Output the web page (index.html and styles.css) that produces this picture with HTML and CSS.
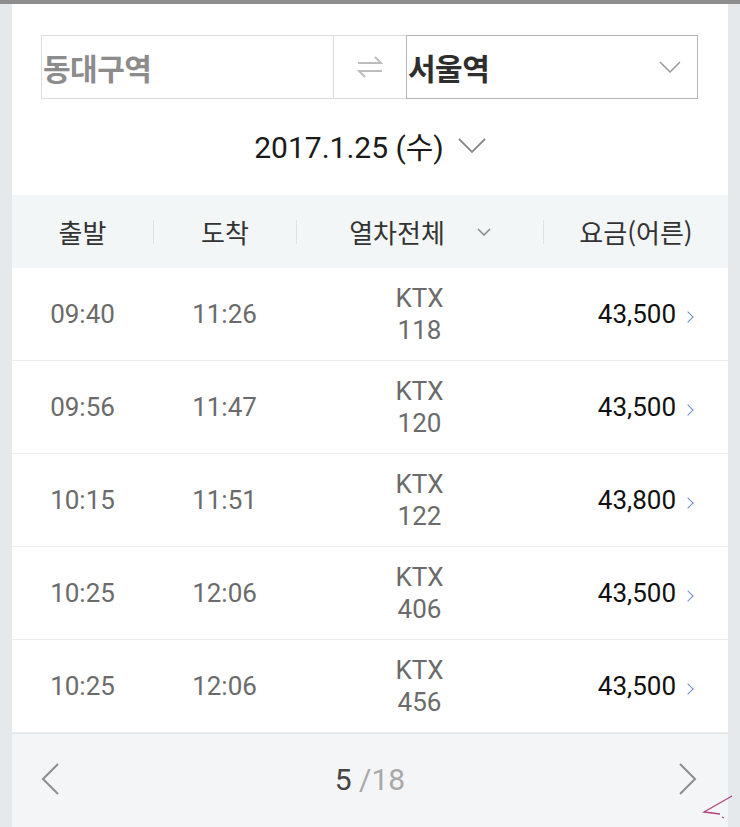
FILE: index.html
```html
<!DOCTYPE html>
<html lang="ko">

<head>
    <meta charset="UTF-8">
    <meta name="viewport" content="width=device-width, initial-scale=1.0">
    <title>열차 조회</title>
    <link rel="stylesheet" href="styles.css">
</head>

<body>
    <div class="page">
        <div class="card">
            <div class="route">
                <div class="station from">동대구역</div>
                <div class="swap">
                    <svg width="28" height="24" viewBox="0 0 28 24" fill="none" stroke="#bdbdbd" stroke-width="2">
                        <path d="M2 8 H25 L19 2" />
                        <path d="M26 16 H3 L9 22" />
                    </svg>
                </div>
                <div class="station to">
                    서울역
                    <svg class="select-arrow" width="22" height="12" viewBox="0 0 22 12" fill="none" stroke="#999" stroke-width="1.5">
                        <path d="M1 1 L11 11 L21 1" />
                    </svg>
                </div>
            </div>

            <div class="date">
                2017.1.25 (수)
                <svg width="28" height="16" viewBox="0 0 28 16" fill="none" stroke="#8a8a8a" stroke-width="1.8">
                    <path d="M1 1 L14 14 L27 1" />
                </svg>
            </div>

            <div class="table-head">
                <div class="head-cell">출발</div>
                <div class="head-cell sep">도착</div>
                <div class="head-cell sep">열차전체
                    <svg class="small-arrow" width="14" height="8" viewBox="0 0 14 8" fill="none" stroke="#888" stroke-width="1.5">
                        <path d="M1 1 L7 7 L13 1" />
                    </svg>
                </div>
                <div class="head-cell sep">요금(어른)</div>
            </div>

            <div class="rows">
                <div class="row">
                    <div class="time">09:40</div>
                    <div class="time">11:26</div>
                    <div class="train">KTX<br>118</div>
                    <div class="fare">43,500 <span class="go"></span></div>
                </div>
                <div class="row">
                    <div class="time">09:56</div>
                    <div class="time">11:47</div>
                    <div class="train">KTX<br>120</div>
                    <div class="fare">43,500 <span class="go"></span></div>
                </div>
                <div class="row">
                    <div class="time">10:15</div>
                    <div class="time">11:51</div>
                    <div class="train">KTX<br>122</div>
                    <div class="fare">43,800 <span class="go"></span></div>
                </div>
                <div class="row">
                    <div class="time">10:25</div>
                    <div class="time">12:06</div>
                    <div class="train">KTX<br>406</div>
                    <div class="fare">43,500 <span class="go"></span></div>
                </div>
                <div class="row">
                    <div class="time">10:25</div>
                    <div class="time">12:06</div>
                    <div class="train">KTX<br>456</div>
                    <div class="fare">43,500 <span class="go"></span></div>
                </div>
            </div>

            <div class="pager">
                <svg width="20" height="32" viewBox="0 0 20 32" fill="none" stroke="#8d8d8d" stroke-width="2">
                    <path d="M18 1 L3 16 L18 31" />
                </svg>
                <div class="page-num"><span class="current">5</span> <span class="total">/18</span></div>
                <svg width="20" height="32" viewBox="0 0 20 32" fill="none" stroke="#8d8d8d" stroke-width="2">
                    <path d="M2 1 L17 16 L2 31" />
                </svg>
                <svg class="scribble" width="34" height="26" viewBox="0 0 34 26" fill="none" stroke="#b0457f" stroke-width="1.3">
                    <path d="M32 2 L4 18 L20 20" />
                    <path d="M22 23 L24 24" />
                </svg>
            </div>
        </div>
    </div>
</body>

</html>
```

FILE: styles.css
```css
body {
    margin: 0;
    background: #e6e9ec;
    font-family: Roboto, "Noto Sans CJK KR", sans-serif;
}

.page {
    border-top: 4px solid #8e8e8e;
}

.card {
    margin: 0 12px;
    background: #fff;
}

.route {
    display: flex;
    height: 64px;
    padding: 31px 30px 0 29px;
}

.station {
    display: flex;
    align-items: center;
    box-sizing: border-box;
    font-family: "Noto Sans CJK KR", sans-serif;
    font-size: 30px;
    font-weight: bold;
    letter-spacing: -0.5px;
}

.station.from {
    width: 293px;
    flex: none;
    border: 1px solid #dcdcdc;
    color: #8c8c8c;
    padding-left: 1px;
}

.swap {
    width: 72px;
    flex: none;
    display: flex;
    align-items: center;
    justify-content: center;
    border-top: 1px solid #dcdcdc;
    border-bottom: 1px solid #dcdcdc;
}

.station.to {
    flex: 1;
    border: 1px solid #b4b4b4;
    color: #2e2e2e;
    padding-left: 1px;
    justify-content: space-between;
    padding-right: 16px;
}

.date {
    height: 92px;
    padding-bottom: 4px;
    display: flex;
    align-items: center;
    justify-content: center;
    gap: 14px;
    font-size: 30px;
    color: #1a1a1a;
}

.date svg {
    margin-top: 2px;
}

.table-head {
    display: grid;
    grid-template-columns: 141px 143px 247px 1fr;
    align-items: center;
    height: 73px;
    background: #f2f6f6;
}

.head-cell {
    display: flex;
    align-items: center;
    justify-content: center;
    height: 24px;
    font-family: "Noto Sans CJK KR", sans-serif;
    font-size: 26px;
    color: #333;
}

.head-cell.sep {
    border-left: 1px solid #dde2e2;
}

.small-arrow {
    margin-left: 32px;
}

.row {
    display: grid;
    grid-template-columns: 141px 143px 247px 1fr;
    align-items: center;
    height: 93px;
    box-sizing: border-box;
    border-bottom: 1px solid #ececec;
}

.time {
    text-align: center;
    font-size: 26px;
    color: #6b6b6b;
}

.train {
    text-align: center;
    font-size: 26px;
    line-height: 32px;
    color: #6b6b6b;
}

.fare {
    display: flex;
    align-items: center;
    justify-content: flex-end;
    gap: 8px;
    padding-right: 36px;
    font-size: 26px;
    color: #111;
}

.go {
    width: 7px;
    height: 7px;
    border-top: 1.5px solid #6e8ed0;
    border-right: 1.5px solid #6e8ed0;
    transform: rotate(45deg);
    margin-top: 6px;
}

.pager {
    position: relative;
    display: flex;
    align-items: center;
    justify-content: space-between;
    height: 90px;
    padding: 0 30px 10px 28px;
    background: #f4f5f6;
    border-top: 1px solid #e4e6e8;
}

.page-num {
    font-size: 30px;
    padding-left: 2px;
}

.current {
    color: #444;
}

.total {
    color: #a8a8a8;
}

.scribble {
    position: absolute;
    right: -6px;
    bottom: 14px;
}
```
